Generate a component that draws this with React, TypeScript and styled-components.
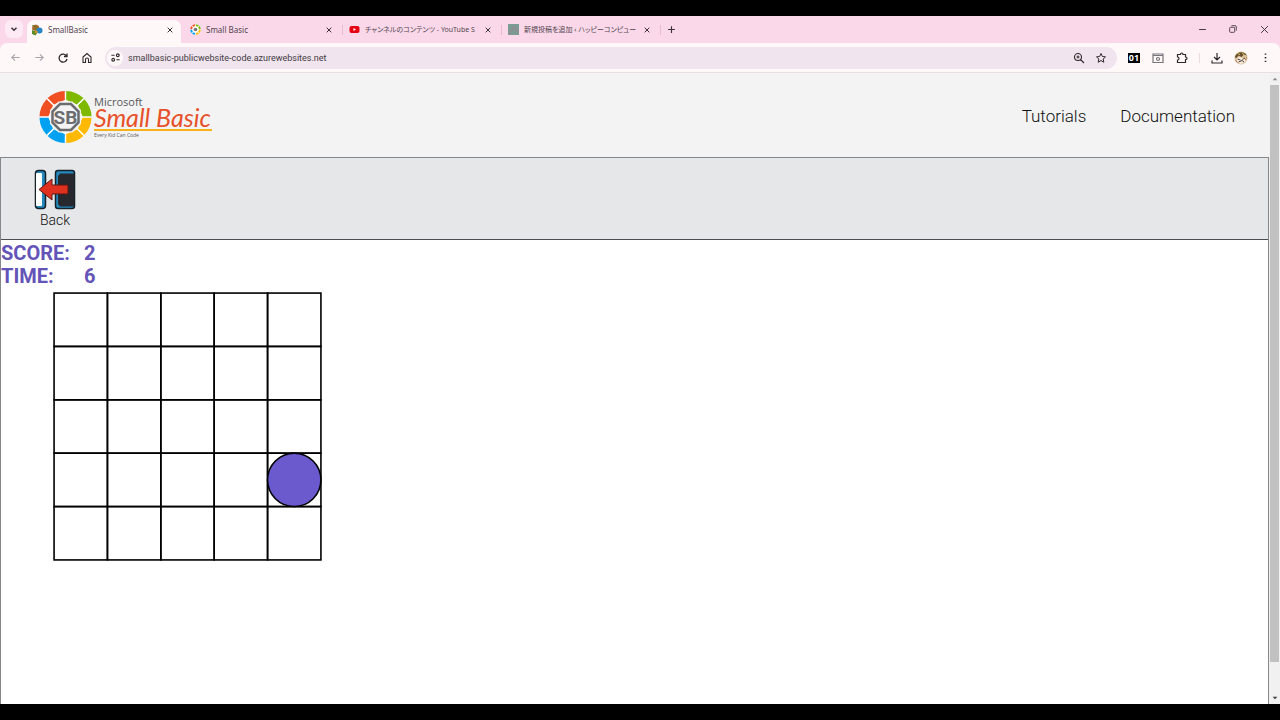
import React from "react";
import styled, { createGlobalStyle } from "styled-components";

const GlobalStyle = createGlobalStyle`
  *, *::before, *::after { box-sizing: border-box; }
  body { margin: 0; background: #000; }
  button { border: 0; padding: 0; margin: 0; background: none; color: inherit; font: inherit; cursor: pointer; }
  svg { display: block; flex: none; }
`;

const Screen = styled.div`
  display: flex;
  flex-direction: column;
  min-height: 100vh;
  padding: 16px 0;
  background: #000;
  font-family: Roboto, "Noto Sans CJK JP", sans-serif;
`;

const Browser = styled.div`
  flex: 1;
  display: flex;
  flex-direction: column;
  background: #fad8e9;
`;

const TabStrip = styled.div`
  display: flex;
  align-items: stretch;
  height: 27px;
  padding: 4px 9px 0 5px;
  color: #3b2f38;
`;

const TabSearch = styled.button`
  display: grid;
  place-items: center;
  width: 18px;
  height: 18px;
  border-radius: 6px;
  background: #fdeaf4;
  margin-right: 4px;
`;

const Tab = styled.div<{ $active?: boolean }>`
  display: flex;
  align-items: center;
  width: ${(p) => (p.$active ? 154 : 156)}px;
  height: 23px;
  padding: 0 ${(p) => (p.$active ? 6 : 8)}px 4px 4px;
  margin-right: ${(p) => (p.$active ? 5 : 0)}px;
  border-radius: 7px 7px 0 0;
  background: ${(p) => (p.$active ? "#fff8f9" : "transparent")};
`;

const TabTitle = styled.button<{ $compact?: boolean }>`
  flex: 1;
  min-width: 0;
  display: flex;
  align-items: center;
  gap: 5px;
  height: 12px;
  font-family: "Noto Sans", "Noto Sans CJK JP", sans-serif;
  font-size: ${(p) => (p.$compact ? 7 : 8)}px;
  line-height: 12px;
  font-feature-settings: "palt";
  white-space: nowrap;
  text-align: left;
  color: #51454e;
`;

const IconButton = styled.button<{ $size?: number }>`
  display: grid;
  place-items: center;
  flex: none;
  width: ${(p) => p.$size ?? 14}px;
  height: ${(p) => p.$size ?? 14}px;
`;

const Divider = styled.span`
  align-self: center;
  width: 1px;
  height: 10px;
  margin: 0 2px 4px 0;
  background: #ecb9d2;
`;

const NewTab = styled(IconButton)`
  margin: 2px 0 0 1px;
`;

const WindowControls = styled.div`
  display: flex;
  gap: 17px;
  margin: 2px 0 0 auto;
`;

const Toolbar = styled.div`
  display: flex;
  align-items: center;
  gap: 10px;
  height: 30px;
  padding: 0 8px;
  border-radius: 7px 7px 0 0;
  border-bottom: 1px solid #eadfe3;
  background: #fff8f9;
  color: #2f292d;
`;

const AddressBar = styled.form`
  flex: 1;
  display: flex;
  align-items: center;
  gap: 8px;
  height: 22px;
  margin-left: 1px;
  padding: 0 9px 0 2px;
  border-radius: 11px;
  background: #f0e4ee;
`;

const SiteInfo = styled.button`
  display: grid;
  place-items: center;
  width: 16px;
  height: 16px;
  margin-right: -5px;
  border-radius: 50%;
  background: #fff8f9;
`;

const Address = styled.input`
  flex: 1;
  min-width: 0;
  border: 0;
  outline: 0;
  padding: 0 2px;
  background: none;
  color: #423a42;
  font: 9px/14px Roboto, sans-serif;
`;

const ToolGroup = styled.div`
  display: flex;
  align-items: center;
  gap: 10px;
`;

const ToolDivider = styled.span`
  width: 1px;
  height: 10px;
  background: #efd9e2;
`;

const Viewport = styled.div`
  flex: 1;
  display: flex;
  background: #fff;
`;

const Page = styled.main`
  flex: 1;
  min-width: 0;
  display: flex;
  flex-direction: column;
  color: #1f1f1f;
`;

const SiteHeader = styled.header`
  display: flex;
  align-items: center;
  justify-content: space-between;
  height: 84px;
  padding: 4px 34px 0 38px;
  background: #f3f3f3;
`;

const Nav = styled.nav`
  display: flex;
  gap: 34px;
  padding-bottom: 2px;
`;

const NavLink = styled.a`
  color: #111;
  font-size: 17px;
  font-weight: 350;
  line-height: 24px;
  text-decoration: none;
`;

const Program = styled.section`
  flex: 1;
  display: flex;
  flex-direction: column;
  border: solid #85878a;
  border-width: 1px 1px 0;
  background: #fff;
`;

const Commands = styled.div`
  height: 82px;
  padding: 11px 33px;
  border-bottom: 1px solid #4b4d50;
  background: #e6e7e9;
`;

const BackButton = styled.button`
  display: flex;
  flex-direction: column;
  align-items: center;
  width: 42px;
  color: #111;
  font-size: 14px;
  font-weight: 350;
  line-height: 18px;
`;

const Stats = styled.dl`
  display: grid;
  grid-template-columns: 83px auto;
  justify-content: start;
  margin: 2px 0 4px;
  color: #6454b8;
  font-size: 20px;
  line-height: 23px;
  font-weight: 700;

  dt, dd { margin: 0; }
`;

const Board = styled.div`
  padding: 0 52px;
`;

const Scrollbar = styled.div`
  display: flex;
  flex-direction: column;
  width: 11px;
  padding: 0 1px;
  background: #f1f1f1;
`;

const ScrollTrack = styled.div`
  flex: 1;
`;

const ScrollThumb = styled.div`
  height: 95%;
  background: #c1c1c1;
`;

const ScrollButton = styled.button`
  display: grid;
  place-items: center;
  height: 12px;
`;

type GlyphProps = { d: string; size?: number; width?: number; color?: string; fill?: string };

/* Line icon on a 24-unit grid. */
const Glyph = ({ d, size = 12, width = 2.4, color = "currentColor", fill = "none" }: GlyphProps) => (
  <svg width={size} height={size} viewBox="0 0 24 24" fill={fill} stroke={color} strokeWidth={width} aria-hidden="true">
    <path d={d} />
  </svg>
);

const CLOSE = "M5 5L19 19M19 5L5 19";

const BlocksIcon = () => (
  <svg width="12" height="12" viewBox="0 0 24 24" aria-hidden="true">
    <path d="M3 3l7-2 6 3v7l-7 3-7-3z" fill="#a66a2c" />
    <path d="M3 3l7 3v7" fill="none" stroke="#5f7d22" strokeWidth="2" />
    <circle cx="17" cy="13" r="6" fill="#2585c7" />
    <path d="M2 12l6 2 5 3-4 6-7-3z" fill="#5b8c2a" />
    <path d="M9 13l5 2-3 4-4-2z" fill="#d89429" />
  </svg>
);

const COLORS = ["#7eb900", "#7eb900", "#ffb900", "#ffb900", "#00a1f1", "#00a1f1", "#f04e23", "#f04e23"];

const polar = (r: number, deg: number) => {
  const a = ((deg - 90) * Math.PI) / 180;
  return `${(r * Math.cos(a)).toFixed(2)} ${(r * Math.sin(a)).toFixed(2)}`;
};

/* Eight coloured ring segments around an octagonal hub. */
const Ring = ({ gap }: { gap: number }) => (
  <g>
    {COLORS.map((c, i) => (
      <path
        key={i}
        d={`M${polar(26, i * 45 + gap)}A26 26 0 0 1 ${polar(26, i * 45 + 45 - gap)}L${polar(17, i * 45 + 45 - gap * 1.5)}L${polar(17, i * 45 + gap * 1.5)}Z`}
        fill={c}
      />
    ))}
  </g>
);

const RingIcon = () => (
  <svg width="11" height="11" viewBox="-27 -27 54 54" aria-hidden="true">
    <circle r="26" fill="#fff" />
    <Ring gap={4} />
    <circle r="9" fill="#777" />
  </svg>
);

const YouTubeIcon = () => (
  <svg width="11" height="11" viewBox="0 0 22 22" aria-hidden="true">
    <rect x="1" y="4" width="20" height="14" rx="4" fill="#e60012" />
    <path d="M9 8l5 3-5 3z" fill="#fff" />
  </svg>
);

const PostIcon = () => (
  <svg width="11" height="11" viewBox="0 0 11 11" aria-hidden="true">
    <rect width="11" height="11" fill="#7b9b93" />
    <path d="M1 10L6 3l4 5" fill="none" stroke="#8f8d90" strokeWidth="2" />
  </svg>
);

const AvatarIcon = () => (
  <svg width="14" height="14" viewBox="0 0 28 28" aria-hidden="true">
    <circle cx="14" cy="14" r="13" fill="#d9c09b" />
    <path d="M2 11C6 0 21 0 26 9L20 7L15 12L9 9L4 15z" fill="#66502f" />
    <path d="M7 5l5 2M17 4l3 4" stroke="#e8c763" strokeWidth="2" />
    <path d="M5 15l6-3 7 3 6-2-2 9-8 4-8-4z" fill="#f8eee4" />
    <path d="M7 16l6 2M17 17l5-3M9 22l7-3 4 3" stroke="#4e3b2d" strokeWidth="2" fill="none" />
    <path d="M3 18l4 5M25 13l-2 5" stroke="#bb6a3c" strokeWidth="2" />
  </svg>
);

const Logo = () => (
  <svg width="176" height="54" viewBox="0 0 176 54" role="img" aria-label="Microsoft Small Basic">
    <g transform="translate(27.5 27)">
      <circle r="25" fill="#fff" />
      <Ring gap={1.6} />
      <path d="M-7 -15.500H7L15.500 -7V7L7 15.500H-7L-15.500 7V-7Z" fill="#f3f3f3" />
      <path d="M-5.500 -13H5.500L13 -5.500V5.500L5.500 13H-5.500L-13 5.500V-5.500Z" fill="none" stroke="#6b6c6f" strokeWidth="2.500" />
      <text y="7" textAnchor="middle" fontFamily="Roboto, sans-serif" fontWeight="700" fontSize="19" fill="#6b6c6f">SB</text>
    </g>
    <text x="56" y="16" fontFamily="'Open Sans', sans-serif" fontSize="11" fill="#58595b">Microsoft</text>
    <text x="56" y="37" fontFamily="Lato, sans-serif" fontStyle="italic" fontSize="25" fill="#e8502a">Small Basic</text>
    <rect x="56" y="39" width="118" height="2" fill="#f6b21b" />
    <text x="56" y="47" fontFamily="'Open Sans', sans-serif" fontSize="5" fill="#58595b">Every Kid Can Code</text>
  </svg>
);

const BackIcon = () => (
  <svg width="42" height="42" viewBox="0 0 42 42" aria-hidden="true">
    <rect x="1.5" y="1.5" width="10" height="38" rx="3" fill="#2589bd" stroke="#15212a" strokeWidth="1.5" />
    <rect x="2" y="4" width="6" height="33" rx="1" fill="#fff" />
    <path d="M24 1.5H38Q40.5 1.5 40.5 4V37Q40.5 39.5 38 39.5H24Q21.5 39.5 21.5 37V4Q21.5 1.5 24 1.5Z" fill="#2589bd" stroke="#15212a" strokeWidth="1.5" />
    <path d="M26 4.5H40V37.5H26L24 35V7Z" fill="#26282d" />
    <path d="M5 20.5L18 10V16H34V25H18V31Z" fill="#e03120" stroke="#5c1712" strokeWidth="1" />
  </svg>
);

const CELLS = Array.from({ length: 25 }, (_, i) => ({ x: (i % 5) * 100, y: Math.floor(i / 5) * 100 }));

const tabs = [
  { title: "SmallBasic", icon: <BlocksIcon />, active: true },
  { title: "Small Basic", icon: <RingIcon /> },
  { title: "チャンネルのコンテンツ - YouTube S", icon: <YouTubeIcon />, compact: true },
  { title: "新規投稿を追加 ‹ ハッピーコンピュー", icon: <PostIcon />, compact: true },
];

export default function App() {
  return (
    <Screen>
      <GlobalStyle />
      <Browser>
        <TabStrip>
          <TabSearch aria-label="Search tabs">
            <Glyph d="M6 9l6 6 6-6" size={10} width={3.5} />
          </TabSearch>
          {tabs.map((t, i) => (
            <React.Fragment key={t.title}>
              <Tab $active={t.active}>
                <TabTitle $compact={t.compact}>
                  {t.icon}
                  <span>{t.title}</span>
                </TabTitle>
                <IconButton $size={10} aria-label={`Close ${t.title}`}>
                  <Glyph d={CLOSE} size={8} width={3} />
                </IconButton>
              </Tab>
              {i > 0 && <Divider />}
            </React.Fragment>
          ))}
          <NewTab aria-label="New tab">
            <Glyph d="M12 3V21M3 12H21" size={9} width={3} />
          </NewTab>
          <WindowControls>
            <IconButton aria-label="Minimize"><Glyph d="M3 12H21" size={9} width={2.5} /></IconButton>
            <IconButton aria-label="Restore"><Glyph d="M4 10Q4 8 6 8H14Q16 8 16 10V18Q16 20 14 20H6Q4 20 4 18ZM8 5Q8 4 10 4H17Q20 4 20 7V14Q20 16 19 16" size={10} width={2} /></IconButton>
            <IconButton aria-label="Close window"><Glyph d="M3 3L21 21M21 3L3 21" size={9} width={2.5} /></IconButton>
          </WindowControls>
        </TabStrip>
        <Toolbar>
          <IconButton aria-label="Back"><Glyph d="M21 12H4M11 5L4 12L11 19" color="#aaa2a8" size={11} /></IconButton>
          <IconButton aria-label="Forward"><Glyph d="M3 12H20M13 5L20 12L13 19" color="#aaa2a8" size={11} /></IconButton>
          <IconButton aria-label="Reload"><Glyph d="M19 8A8 8 0 1 0 20 14M20 3V9H14" size={12} width={2.6} /></IconButton>
          <IconButton aria-label="Home"><Glyph d="M4 10L12 3L20 10V21H15V15Q15 12 12 12Q9 12 9 15V21H4Z" size={12} width={2.2} /></IconButton>
          <AddressBar>
            <SiteInfo type="button" aria-label="Site information">
              <Glyph d="M3 7H10M14 7A3 3 0 1 0 20 7A3 3 0 1 0 14 7M4 17A3 3 0 1 0 10 17A3 3 0 1 0 4 17M14 17H21" size={11} />
            </SiteInfo>
            <Address aria-label="Address" defaultValue="smallbasic-publicwebsite-code.azurewebsites.net" />
            <IconButton type="button" aria-label="Zoom"><Glyph d="M3 10A7 7 0 1 0 17 10A7 7 0 1 0 3 10M15 15L22 22M10 7V13M7 10H13" width={2.2} /></IconButton>
            <IconButton type="button" aria-label="Bookmark this page"><Glyph d="M12 3L14.8 9L21 9.7L16.3 14L17.6 20.5L12 17L6.4 20.5L7.7 14L3 9.7L9.2 9Z" width={2} /></IconButton>
          </AddressBar>
          <ToolGroup>
            <IconButton aria-label="Counter extension">
              <svg width="12" height="12" viewBox="0 0 12 12" aria-hidden="true">
                <rect y="1" width="12" height="10" fill="#000" />
                <text x="6" y="9" textAnchor="middle" fontFamily="'Noto Sans', sans-serif" fontWeight="700" fontSize="9" fill="#fff">01</text>
              </svg>
            </IconButton>
            <IconButton aria-label="Capture extension">
              <Glyph d="M2 4H22V21H2ZM2 7H22M9 14A3 3 0 1 0 15 14A3 3 0 1 0 9 14" color="#77757a" size={12} />
            </IconButton>
            <IconButton aria-label="Extensions"><Glyph d="M3 5H9Q9 2 11.5 2Q14 2 14 5H19V10Q22 10 22 12.5Q22 15 19 15V21H3V16Q6 16 6 13Q6 10 3 10Z" /></IconButton>
            <ToolDivider />
            <IconButton aria-label="Downloads"><Glyph d="M12 2V15M6 10L12 16L18 10M2 17V22H22V17" /></IconButton>
            <IconButton aria-label="Profile"><AvatarIcon /></IconButton>
            <IconButton aria-label="Browser menu"><Glyph d="M12 3V6M12 11V14M12 19V22" size={11} width={3.5} /></IconButton>
          </ToolGroup>
        </Toolbar>
        <Viewport>
          <Page>
            <SiteHeader>
              <a href="#home"><Logo /></a>
              <Nav>
                <NavLink href="#tutorials">Tutorials</NavLink>
                <NavLink href="#documentation">Documentation</NavLink>
              </Nav>
            </SiteHeader>
            <Program>
              <Commands>
                <BackButton>
                  <BackIcon />
                  Back
                </BackButton>
              </Commands>
              <Stats>
                <dt>SCORE:</dt>
                <dd>2</dd>
                <dt>TIME:</dt>
                <dd>6</dd>
              </Stats>
              <Board>
                <svg width="269" height="269" viewBox="-2 -2 504 504" role="img" aria-label="Game board">
                  {CELLS.map((c) => (
                    <rect key={`${c.x}-${c.y}`} x={c.x} y={c.y} width="100" height="100" fill="none" stroke="#000" strokeWidth="3" />
                  ))}
                  <circle cx="450" cy="350" r="50" fill="#6a5acd" stroke="#000" strokeWidth="3" />
                </svg>
              </Board>
            </Program>
          </Page>
          <Scrollbar>
            <ScrollButton aria-label="Scroll up"><Glyph d="M5 16L12 8L19 16Z" size={8} width={0} fill="#8a8a8a" /></ScrollButton>
            <ScrollTrack><ScrollThumb /></ScrollTrack>
            <ScrollButton aria-label="Scroll down"><Glyph d="M5 8L12 16L19 8Z" size={8} width={0} fill="#404040" /></ScrollButton>
          </Scrollbar>
        </Viewport>
      </Browser>
    </Screen>
  );
}
